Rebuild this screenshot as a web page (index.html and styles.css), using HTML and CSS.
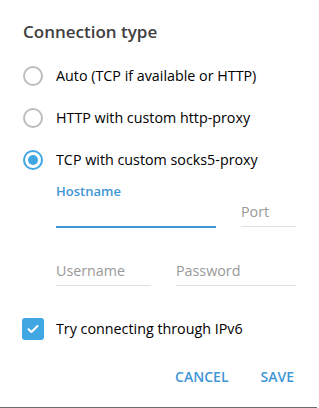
FILE: index.html
```html
<!DOCTYPE html>
<html>
<head>
<meta charset="utf-8">
<link rel="stylesheet" href="styles.css">
</head>
<body>
<div class="dialog">
  <div class="title">Connection type</div>
  <div class="options">
    <label class="radio-row"><span class="radio"></span><span class="opt-text">Auto (TCP if available or HTTP)</span></label>
    <label class="radio-row"><span class="radio"></span><span class="opt-text">HTTP with custom http-proxy</span></label>
    <label class="radio-row"><span class="radio checked"><span class="dot"></span></span><span class="opt-text">TCP with custom socks5-proxy</span></label>
  </div>
  <div class="fields">
    <div class="field-row">
      <div class="field host">
        <div class="label">Hostname</div>
        <div class="line active"></div>
      </div>
      <div class="field port">
        <div class="ph">Port</div>
        <div class="line"></div>
      </div>
    </div>
    <div class="field-row second">
      <div class="field user">
        <div class="ph">Username</div>
        <div class="line"></div>
      </div>
      <div class="field pass">
        <div class="ph">Password</div>
        <div class="line"></div>
      </div>
    </div>
  </div>
  <div class="check-row">
    <span class="checkbox">
      <svg width="12" height="10" viewBox="0 0 12 10"><path d="M1.5 5.2 L4.5 8 L10.5 2" fill="none" stroke="#fff" stroke-width="2" stroke-linecap="round" stroke-linejoin="round"/></svg>
    </span>
    <span class="opt-text">Try connecting through IPv6</span>
  </div>
  <div class="buttons">
    <span class="btn">CANCEL</span>
    <span class="btn">SAVE</span>
  </div>
</div>
<div class="edge"></div>
</body>
</html>
```
FILE: styles.css
```css
html, body {
  margin: 0;
  padding: 0;
  background: #ffffff;
}
body {
  width: 319px;
  height: 408px;
  overflow: hidden;
  font-family: "Open Sans", "DejaVu Sans", sans-serif;
  position: relative;
}
.dialog {
  display: flex;
  flex-direction: column;
  padding: 0 23px 0 23px;
  height: 407px;
  box-sizing: border-box;
}
.title {
  margin-top: 21px;
  font-size: 17px;
  font-weight: 600;
  color: #404040;
  line-height: 22px;
}
.options {
  display: flex;
  flex-direction: column;
  margin-top: 23px;
  gap: 22px;
}
.radio-row {
  display: flex;
  align-items: center;
  height: 20px;
}
.radio {
  width: 20px;
  height: 20px;
  box-sizing: border-box;
  border: 2px solid #bdbdbd;
  border-radius: 50%;
  display: flex;
  align-items: center;
  justify-content: center;
  flex: none;
}
.radio.checked {
  border-color: #40a7e3;
}
.dot {
  width: 10px;
  height: 10px;
  border-radius: 50%;
  background: #40a7e3;
}
.opt-text {
  margin-left: 13px;
  font-size: 14.3px;
  color: #000000;
  line-height: 20px;
}
.fields {
  margin-left: 33px;
  margin-top: 13px;
  display: flex;
  flex-direction: column;
}
.field-row {
  display: flex;
  align-items: flex-end;
  gap: 25px;
}
.field-row.second {
  margin-top: 34px;
}
.field {
  display: flex;
  flex-direction: column;
}
.host { width: 160px; }
.port { width: 55px; }
.user { width: 95px; }
.pass { width: 120px; }
.label {
  font-size: 13px;
  font-weight: 600;
  color: #3f97d5;
  line-height: 16px;
  height: 43px;
}
.ph {
  font-size: 14.3px;
  color: #999999;
  line-height: 18px;
  margin-bottom: 5px;
}
.line {
  height: 1px;
  background: #e0e0e0;
  margin-bottom: 1px;
}
.line.active {
  height: 2px;
  background: #3f97d5;
  margin-bottom: 0;
}
.check-row {
  display: flex;
  align-items: center;
  margin-top: 31px;
  height: 22px;
}
.checkbox {
  width: 22px;
  height: 22px;
  border-radius: 3px;
  background: #40a7e3;
  display: flex;
  align-items: center;
  justify-content: center;
  flex: none;
  margin-left: -1px;
}
.check-row .opt-text {
  margin-left: 12px;
}
.buttons {
  display: flex;
  justify-content: flex-end;
  gap: 32px;
  margin-top: 28px;
  margin-right: 2px;
}
.btn {
  font-size: 14px;
  font-weight: 600;
  color: #3f97d5;
  line-height: 18px;
}
.edge {
  position: absolute;
  left: 0;
  right: 2px;
  bottom: 0;
  height: 1px;
  background: #6b6b6b;
}
```
